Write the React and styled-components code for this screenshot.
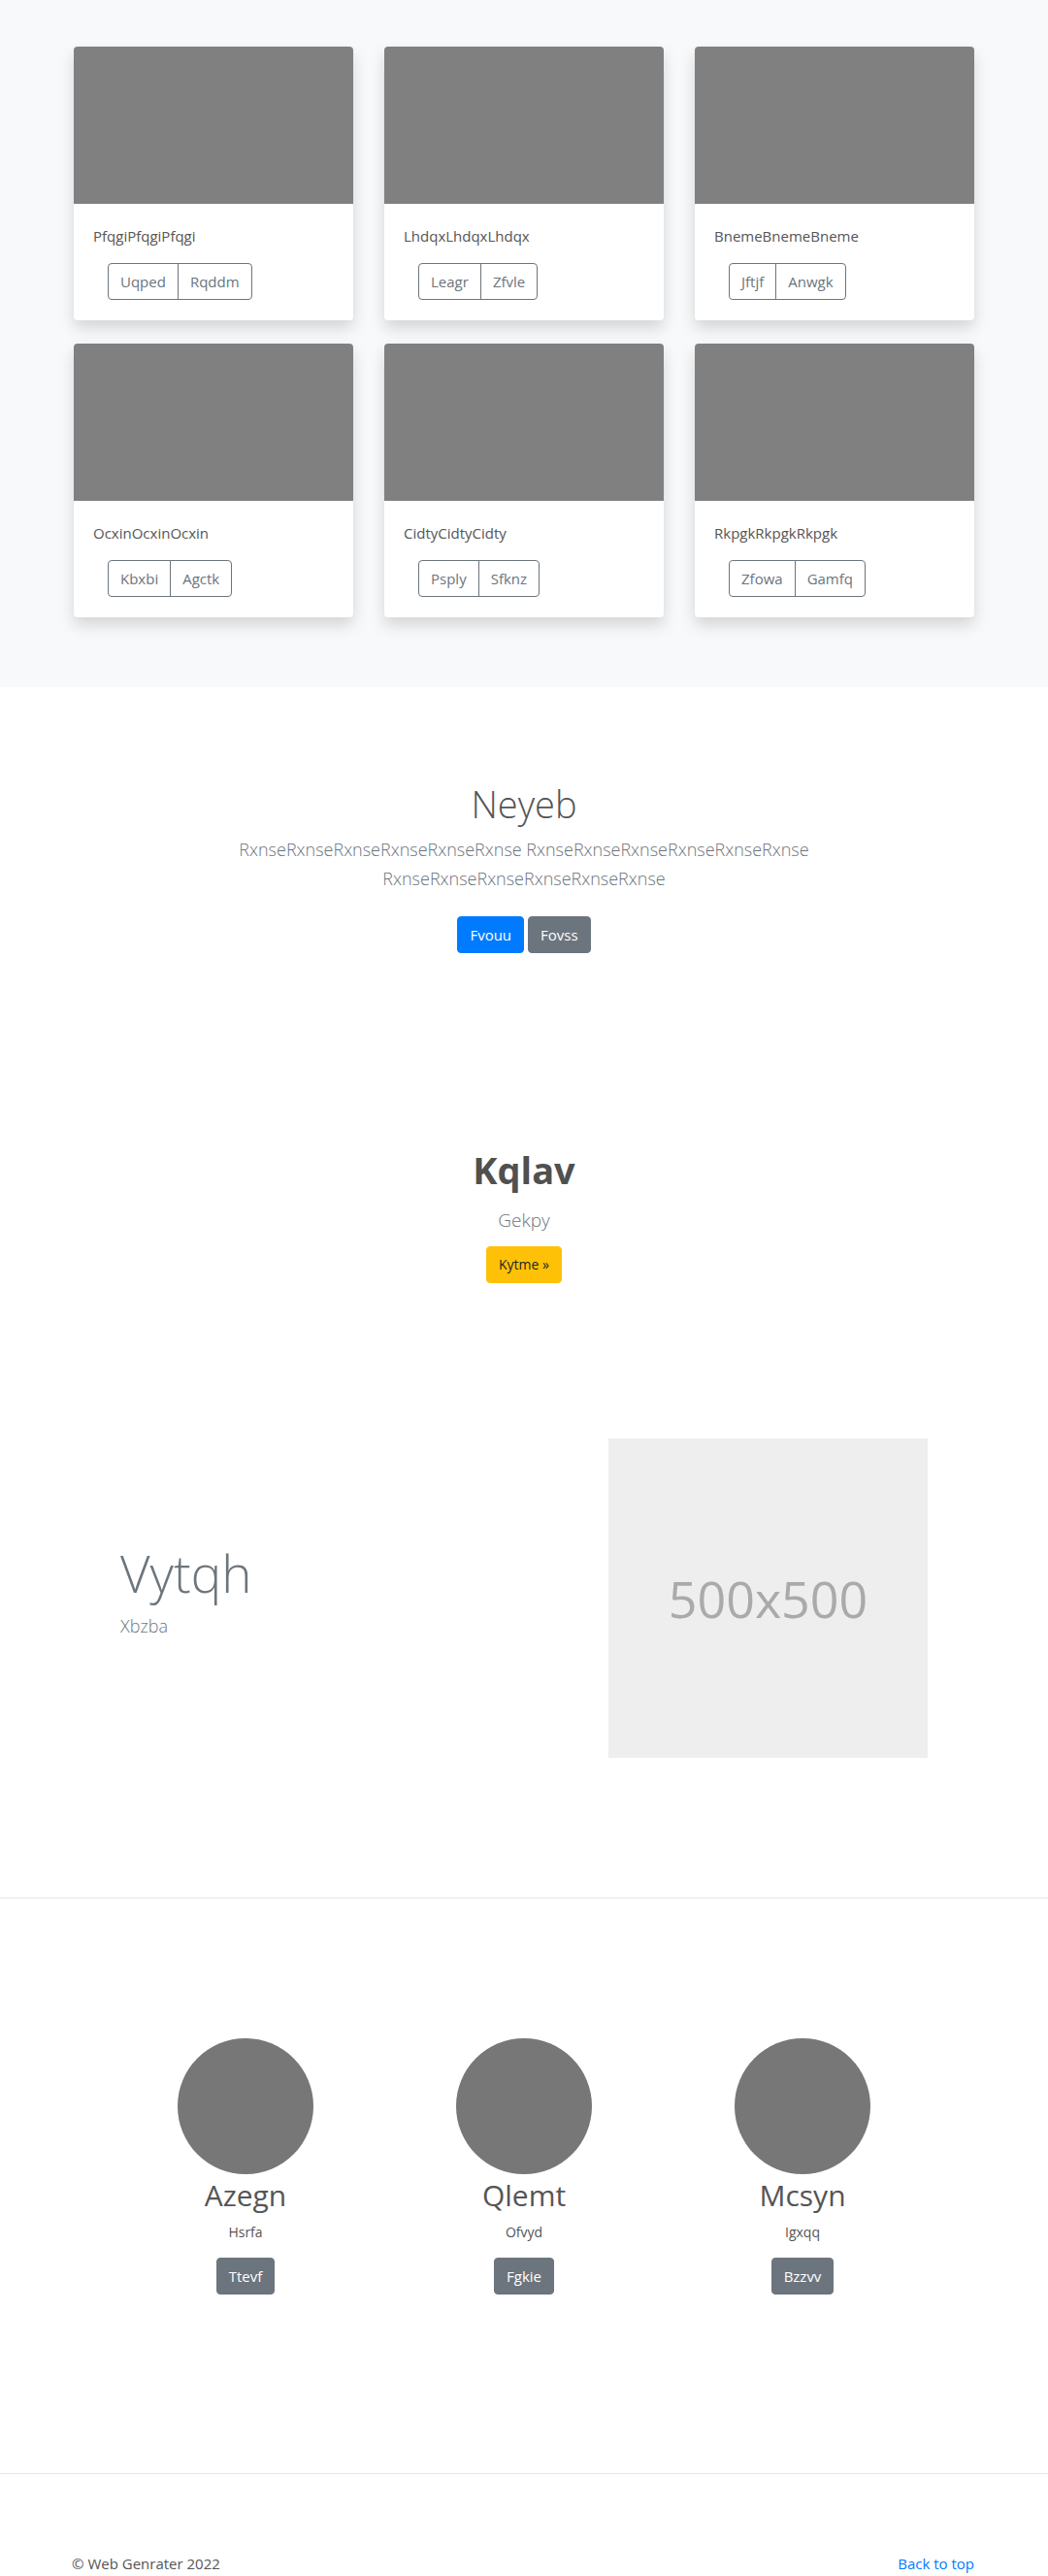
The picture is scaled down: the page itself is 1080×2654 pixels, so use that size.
import React from 'react';
import styled, { createGlobalStyle } from 'styled-components';

const GlobalStyle = createGlobalStyle`
    * {
        box-sizing: border-box;
    }
    body {
        margin: 0;
        font-family: "Open Sans", "Liberation Sans", sans-serif;
        font-size: 16px;
        line-height: 1.5;
        color: #555;
        background: #fff;
    }
`;

const Container = styled.div`
    width: 928px;
    margin: 0 auto;
`;

/* album */

const Album = styled.section`
    background: #f8f9fa;
    padding: 48px 0;
`;

const CardGrid = styled.div`
    display: grid;
    grid-template-columns: repeat(3, 1fr);
    column-gap: 32px;
`;

const Card = styled.div`
    background: #fff;
    border-radius: 4px;
    box-shadow: 0 8px 16px rgba(0, 0, 0, 0.15);
    margin-bottom: 24px;
    height: 282px;
    overflow: hidden;
`;

const Thumb = styled.div`
    height: 162px;
    background: #808080;
`;

const CardBody = styled.div`
    padding: 21px 20px 20px;
`;

const CardText = styled.p`
    margin: 0 0 16px;
    font-size: 15px;
    line-height: 24px;
    color: #555;
`;

const BtnGroup = styled.div`
    display: inline-flex;
    margin-left: 15px;
`;

const OutlineBtn = styled.button`
    font-family: inherit;
    font-size: 15px;
    line-height: 24px;
    padding: 6px 12px;
    color: #6c757d;
    background: transparent;
    border: 1px solid #6c757d;
    border-radius: 0;
    &:first-child {
        border-radius: 4px 0 0 4px;
    }
    &:last-child {
        border-radius: 0 4px 4px 0;
        margin-left: -1px;
    }
`;

/* hero */

const Hero = styled.section`
    padding: 96px 0 0;
    text-align: center;
`;

const HeroInner = styled.div`
    width: 640px;
    margin: 0 auto;
`;

const HeroTitle = styled.h1`
    margin: 0 0 8px;
    font-size: 38px;
    font-weight: 300;
    line-height: 48px;
    color: #555;
`;

const Lead = styled.p`
    margin: 0 0 16px;
    font-size: 18px;
    font-weight: 300;
    line-height: 30px;
    color: #6c757d;
`;

const BtnRow = styled.div`
    display: flex;
    justify-content: center;
    gap: 4px;
    padding-top: 8px;
`;

const variants = {
    primary: { bg: '#007bff', fg: '#fff' },
    secondary: { bg: '#6c757d', fg: '#fff' },
    warning: { bg: '#ffc107', fg: '#212529' },
};

const Btn = styled.button`
    font-family: inherit;
    font-size: ${(p) => p.$size || 15}px;
    line-height: 24px;
    padding: 6px 12px;
    border: 1px solid ${(p) => variants[p.$variant].bg};
    border-radius: 4px;
    background: ${(p) => variants[p.$variant].bg};
    color: ${(p) => variants[p.$variant].fg};
`;

/* call to action */

const Cta = styled.section`
    padding: 199px 0 112px;
    text-align: center;
`;

const CtaTitle = styled.h1`
    margin: 0 0 13px;
    font-size: 38px;
    font-weight: 700;
    line-height: 48px;
    color: #505050;
`;

const CtaLead = styled(Lead)`
    font-size: 19px;
    margin-bottom: 12px;
`;

/* feature with image */

const Feature = styled.section`
    padding: 48px 0 144px;
    border-bottom: 1px solid #e5e5e5;
`;

const FeatureRow = styled(Container)`
    display: grid;
    grid-template-columns: 1fr 1fr;
    align-items: center;
`;

const FeatureText = styled.div`
    padding-left: 48px;
`;

const FeatureTitle = styled.h1`
    margin: 0 0 6px;
    font-size: 53px;
    font-weight: 300;
    line-height: 67px;
    color: #6c757d;
`;

const FeatureLead = styled(Lead)`
    font-size: 18px;
`;

const FeatureMedia = styled.div`
    display: flex;
    justify-content: flex-end;
    padding-right: 48px;
`;

const Placeholder = styled.div`
    width: 329px;
    height: 329px;
    background: #eee;
    color: #aaa;
    font-size: 52px;
    display: flex;
    align-items: center;
    justify-content: center;
`;

/* people */

const People = styled.section`
    padding: 144px 0 184px;
    border-bottom: 1px solid #e5e5e5;
`;

const PeopleGrid = styled.div`
    width: 861px;
    margin: 0 auto;
    display: grid;
    grid-template-columns: repeat(3, 1fr);
    text-align: center;
`;

const Person = styled.div`
    display: flex;
    flex-direction: column;
    align-items: center;
`;

const Avatar = styled.div`
    width: 140px;
    height: 140px;
    border-radius: 50%;
    background: #777;
`;

const PersonName = styled.h2`
    margin: 3px 0 8px;
    font-size: 30px;
    font-weight: 400;
    line-height: 38px;
    color: #555;
`;

const PersonRole = styled.p`
    margin: 0 0 16px;
    font-size: 14px;
    line-height: 21px;
    color: #555;
`;

/* footer */

const Footer = styled.footer`
    padding-top: 80px;
`;

const FooterRow = styled(Container)`
    display: flex;
    justify-content: space-between;
    font-size: 15px;
    line-height: 24px;
`;

const Copy = styled.span`
    margin-left: -2px;
    color: #555;
`;

const TopLink = styled.a`
    color: #007bff;
    text-decoration: none;
`;

const cards = [
    { title: 'PfqgiPfqgiPfqgi', buttons: ['Uqped', 'Rqddm'] },
    { title: 'LhdqxLhdqxLhdqx', buttons: ['Leagr', 'Zfvle'] },
    { title: 'BnemeBnemeBneme', buttons: ['Jftjf', 'Anwgk'] },
    { title: 'OcxinOcxinOcxin', buttons: ['Kbxbi', 'Agctk'] },
    { title: 'CidtyCidtyCidty', buttons: ['Psply', 'Sfknz'] },
    { title: 'RkpgkRkpgkRkpgk', buttons: ['Zfowa', 'Gamfq'] },
];

const people = [
    { name: 'Azegn', role: 'Hsrfa', action: 'Ttevf' },
    { name: 'Qlemt', role: 'Ofvyd', action: 'Fgkie' },
    { name: 'Mcsyn', role: 'Igxqq', action: 'Bzzvv' },
];

const App = () => {
    return (
        <>
            <GlobalStyle />
            <Album>
                <Container>
                    <CardGrid>
                        {cards.map((card) => (
                            <Card key={card.title}>
                                <Thumb />
                                <CardBody>
                                    <CardText>{card.title}</CardText>
                                    <BtnGroup>
                                        {card.buttons.map((b) => (
                                            <OutlineBtn key={b}>{b}</OutlineBtn>
                                        ))}
                                    </BtnGroup>
                                </CardBody>
                            </Card>
                        ))}
                    </CardGrid>
                </Container>
            </Album>

            <Hero>
                <HeroInner>
                    <HeroTitle>Neyeb</HeroTitle>
                    <Lead>
                        RxnseRxnseRxnseRxnseRxnseRxnse RxnseRxnseRxnseRxnseRxnseRxnse RxnseRxnseRxnseRxnseRxnseRxnse
                    </Lead>
                    <BtnRow>
                        <Btn $variant="primary">Fvouu</Btn>
                        <Btn $variant="secondary">Fovss</Btn>
                    </BtnRow>
                </HeroInner>
            </Hero>

            <Cta>
                <CtaTitle>Kqlav</CtaTitle>
                <CtaLead>Gekpy</CtaLead>
                <Btn $variant="warning" $size={14}>Kytme »</Btn>
            </Cta>

            <Feature>
                <FeatureRow>
                    <FeatureText>
                        <FeatureTitle>Vytqh</FeatureTitle>
                        <FeatureLead>Xbzba</FeatureLead>
                    </FeatureText>
                    <FeatureMedia>
                        <Placeholder>500x500</Placeholder>
                    </FeatureMedia>
                </FeatureRow>
            </Feature>

            <People>
                <PeopleGrid>
                    {people.map((p) => (
                        <Person key={p.name}>
                            <Avatar />
                            <PersonName>{p.name}</PersonName>
                            <PersonRole>{p.role}</PersonRole>
                            <Btn $variant="secondary">{p.action}</Btn>
                        </Person>
                    ))}
                </PeopleGrid>
            </People>

            <Footer>
                <FooterRow>
                    <Copy>© Web Genrater 2022</Copy>
                    <TopLink href="#">Back to top</TopLink>
                </FooterRow>
            </Footer>
        </>
    );
};

export default App;
